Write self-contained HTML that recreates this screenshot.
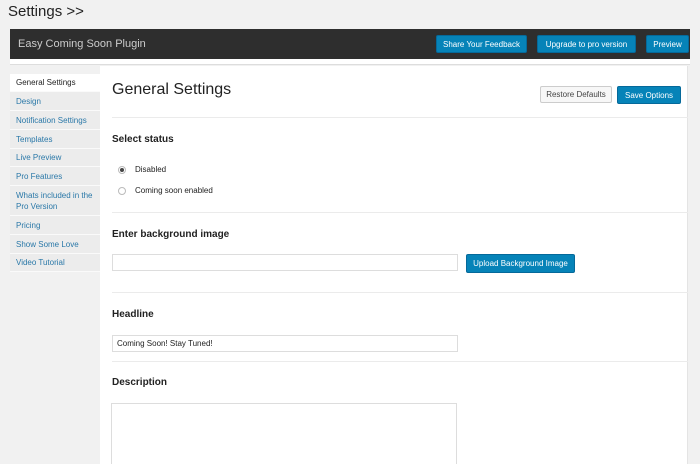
<!DOCTYPE html><html style="overflow:hidden;height:464px"><head><style>
*{margin:0;padding:0;box-sizing:border-box}
body{width:700px;height:464px;overflow:hidden;background:#f1f1f1;font-family:"Liberation Sans",sans-serif;position:relative;color:#222}
.a{position:absolute}
.btn{position:absolute;background:#0683b8;color:#fff;font-size:8px;display:flex;align-items:center;justify-content:center;border-radius:2px;border:1px solid #05699a}
.nav{position:absolute;left:10px;width:90px;font-size:8px;color:#2a78a8;padding-left:6px;background:#ececec;border-bottom:1px solid #fafafa;display:flex;align-items:center;line-height:11px}
.hr{position:absolute;left:112px;width:576px;height:1px;background:#ebebeb}
.lbl{position:absolute;left:112px;font-size:10px;font-weight:bold;color:#222}
.inp{position:absolute;background:#fff;border:1px solid #ddd}
</style></head><body>
<div class="a" style="left:8px;top:3px;font-size:15px;color:#222">Settings &gt;&gt;</div>
<div class="a" style="left:10px;top:29px;width:680px;height:30px;background:#2e2e2e"></div>
<div class="a" style="left:18px;top:38px;font-size:11px;color:#ccc">Easy Coming Soon Plugin</div>
<div class="btn" style="left:436px;top:35px;width:91px;height:18px">Share Your Feedback</div>
<div class="btn" style="left:537px;top:35px;width:99px;height:18px">Upgrade to pro version</div>
<div class="btn" style="left:646px;top:35px;width:43px;height:18px">Preview</div>
<div class="a" style="left:10px;top:59px;width:680px;height:6px;background:#fff;border-bottom:1px solid #ddd"></div>
<div class="a" style="left:100px;top:66px;width:588px;height:398px;background:#fff;border-right:1px solid #e4e4e4"></div>
<div class="nav" style="top:74px;height:18px;background:#fff;color:#222">General Settings</div>
<div class="nav" style="top:92px;height:19px">Design</div>
<div class="nav" style="top:111px;height:19px">Notification Settings</div>
<div class="nav" style="top:130px;height:19px">Templates</div>
<div class="nav" style="top:149px;height:18px">Live Preview</div>
<div class="nav" style="top:167px;height:19px">Pro Features</div>
<div class="nav" style="top:186px;height:30px">Whats included in the Pro Version</div>
<div class="nav" style="top:216px;height:19px">Pricing</div>
<div class="nav" style="top:235px;height:19px">Show Some Love</div>
<div class="nav" style="top:254px;height:18px">Video Tutorial</div>
<div class="a" style="left:112px;top:81px;font-size:16px;color:#222">General Settings</div>
<div class="a" style="left:540px;top:86px;width:72px;height:17px;background:#f7f7f7;border:1px solid #ccc;border-radius:2px;font-size:8px;color:#444;display:flex;align-items:center;justify-content:center">Restore Defaults</div>
<div class="btn" style="left:617px;top:86px;width:64px;height:18px">Save Options</div>
<div class="hr" style="top:117px"></div>
<div class="lbl" style="top:134px">Select status</div>
<div class="a" style="left:118px;top:166px;width:8px;height:8px;border:1px solid #bbb;border-radius:50%;background:#fff"><div style="width:4px;height:4px;margin:1px;border-radius:50%;background:#444"></div></div>
<div class="a" style="left:135px;top:165px;font-size:8px">Disabled</div>
<div class="a" style="left:118px;top:187px;width:8px;height:8px;border:1px solid #bbb;border-radius:50%;background:#fff"></div>
<div class="a" style="left:135px;top:186px;font-size:8px">Coming soon enabled</div>
<div class="hr" style="top:212px"></div>
<div class="lbl" style="top:229px">Enter background image</div>
<div class="inp" style="left:112px;top:254px;width:346px;height:17px"></div>
<div class="btn" style="left:466px;top:254px;width:109px;height:19px">Upload Background Image</div>
<div class="hr" style="top:292px"></div>
<div class="lbl" style="top:309px">Headline</div>
<div class="inp" style="left:112px;top:335px;width:346px;height:17px;font-size:8px;padding:3px 4px">Coming Soon! Stay Tuned!</div>
<div class="hr" style="top:361px"></div>
<div class="lbl" style="top:377px">Description</div>
<div class="inp" style="left:111px;top:403px;width:346px;height:61px;border-bottom:none"></div>
</body></html>
